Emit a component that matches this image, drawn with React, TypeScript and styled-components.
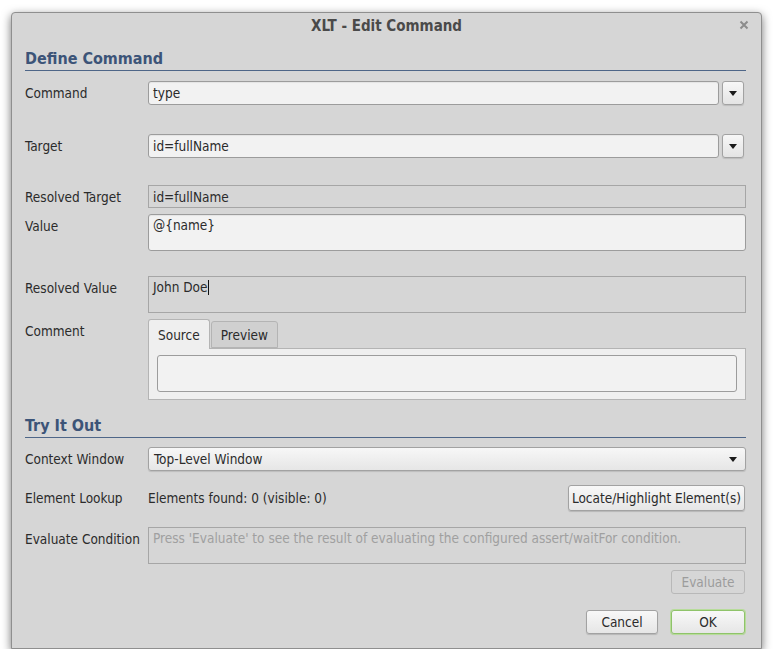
import React from "react";
import styled, { createGlobalStyle } from "styled-components";

const Global = createGlobalStyle`
  html, body { margin: 0; padding: 0; background: #ffffff; }
  body {
    font-family: "DejaVu Sans Condensed", "DejaVu Sans", sans-serif;
    font-stretch: condensed;
    font-size: 13.5px;
    color: #2b2b2b;
  }
  * { box-sizing: border-box; }
`;

const Window = styled.div`
  margin: 12px 0 0 11px;
  width: 751px;
  background: #d6d6d6;
  border: 1px solid #8f8f8f;
  border-radius: 4px 4px 0 0;
  box-shadow: 0 3px 10px rgba(0, 0, 0, 0.55);
  display: flex;
  flex-direction: column;
`;

const TitleBar = styled.div`
  height: 27px;
  padding-bottom: 2px;
  display: flex;
  align-items: center;
  justify-content: center;
  position: relative;
  font-weight: bold;
  font-size: 15px;
  color: #4a4a4a;
`;

const CloseBtn = styled.div`
  position: absolute;
  right: 12px;
  top: 7px;
  width: 10px;
  height: 10px;
  display: flex;
`;

const Body = styled.div`
  padding: 0 15px 14px 13px;
  display: flex;
  flex-direction: column;
`;

const SectionHeader = styled.div<{ $top: number }>`
  padding-top: ${(p) => p.$top}px;
  padding-bottom: 2px;
  line-height: 19px;
  font-size: 16px;
  font-weight: bold;
  color: #3c5478;
  border-bottom: 1px solid #4e6688;
`;

const Row = styled.div<{ $mt: number; $center?: boolean }>`
  margin-top: ${(p) => p.$mt}px;
  display: flex;
  align-items: ${(p) => (p.$center ? "center" : "flex-start")};
`;

const Label = styled.div<{ $pt?: number }>`
  width: 123px;
  flex: none;
  line-height: 22px;
  padding-top: ${(p) => p.$pt ?? 0}px;
  color: #2b2b2b;
`;

const Field = styled.div`
  flex: 1;
  display: flex;
  min-width: 0;
`;

const Input = styled.div<{ $h: number }>`
  flex: 1;
  height: ${(p) => p.$h}px;
  background: #f2f2f2;
  border: 1px solid #9c9c9c;
  border-radius: 3px;
  padding: 0 4px;
  line-height: ${(p) => (p.$h > 30 ? 21 : p.$h - 1)}px;
  color: #2b2b2b;
  box-shadow: inset 0 1px 1px rgba(0, 0, 0, 0.06);
`;

const Disabled = styled.div<{ $h: number; $muted?: boolean }>`
  flex: 1;
  height: ${(p) => p.$h}px;
  background: #d6d6d6;
  border: 1px solid #a6a6a6;
  padding: 0 4px;
  line-height: ${(p) => (p.$h > 30 ? 21 : p.$h - 1)}px;
  color: ${(p) => (p.$muted ? "#a0a0a0" : "#2b2b2b")};
  white-space: nowrap;
  overflow: hidden;
`;

const Caret = styled.span`
  display: inline-block;
  width: 1px;
  height: 15px;
  background: #111;
  vertical-align: -3px;
`;

const DropBtn = styled.div`
  width: 22px;
  height: 24px;
  margin-left: 3px;
  margin-right: 2px;
  border: 1px solid #a2a2a2;
  border-radius: 3px;
  background: linear-gradient(#f7f7f7, #e4e4e4);
  box-shadow: 0 1px 1px rgba(0, 0, 0, 0.12);
  display: flex;
  align-items: center;
  justify-content: center;
`;

const Triangle = () => (
  <svg width="8" height="5" viewBox="0 0 8 5">
    <path d="M0 0 H8 L4 5 Z" fill="#1a1a1a" />
  </svg>
);

const SelectBox = styled.div`
  flex: 1;
  height: 24px;
  border: 1px solid #a2a2a2;
  border-radius: 3px;
  background: linear-gradient(#f7f7f7, #e6e6e6);
  box-shadow: 0 1px 1px rgba(0, 0, 0, 0.12);
  display: flex;
  align-items: center;
  justify-content: space-between;
  padding: 0 8px 0 5px;
`;

const Tabs = styled.div`
  flex: 1;
  display: flex;
  flex-direction: column;
`;

const TabStrip = styled.div`
  display: flex;
  align-items: flex-end;
  height: 29px;
`;

const Tab = styled.div<{ $active?: boolean }>`
  height: ${(p) => (p.$active ? 30 : 27)}px;
  padding: 0 9px;
  margin-right: 1px;
  margin-bottom: ${(p) => (p.$active ? -1 : 0)}px;
  background: ${(p) => (p.$active ? "#efefef" : "#d0d0d0")};
  border: 1px solid #b4b4b4;
  border-bottom: ${(p) => (p.$active ? "none" : "1px solid #b4b4b4")};
  border-radius: 3px 3px 0 0;
  display: flex;
  align-items: center;
  color: #2b2b2b;
  position: relative;
  z-index: ${(p) => (p.$active ? 1 : 0)};
`;

const TabPane = styled.div`
  height: 52px;
  background: #efefef;
  border: 1px solid #b4b4b4;
  padding: 6px 8px 7px 8px;
  display: flex;
`;

const InnerArea = styled.div`
  flex: 1;
  background: #f2f2f2;
  border: 1px solid #9c9c9c;
  border-radius: 3px;
`;

const StaticText = styled.div`
  flex: 1;
  color: #2b2b2b;
`;

const Button = styled.button<{ $w: number; $h?: number; $default?: boolean; $disabled?: boolean }>`
  width: ${(p) => p.$w}px;
  height: ${(p) => p.$h ?? 24}px;
  font: inherit;
  font-stretch: condensed;
  font-size: 13.5px;
  color: ${(p) => (p.$disabled ? "#9c9c9c" : "#2b2b2b")};
  background: ${(p) => (p.$disabled ? "#d6d6d6" : "linear-gradient(#f8f8f8, #e6e6e6)")};
  border: 1px solid ${(p) => (p.$disabled ? "#b8b8b8" : p.$default ? "#8fc36a" : "#a2a2a2")};
  border-radius: 3px;
  box-shadow: ${(p) =>
    p.$disabled
      ? "none"
      : p.$default
      ? "0 0 0 1px #b7dc9a, 0 1px 1px rgba(0,0,0,0.15)"
      : "0 1px 1px rgba(0,0,0,0.15)"};
  padding: 0;
  flex: none;
`;

const ButtonRow = styled.div<{ $mt: number }>`
  margin-top: ${(p) => p.$mt}px;
  margin-right: 1px;
  display: flex;
  justify-content: flex-end;
  gap: 13px;
`;

export default function App() {
  return (
    <>
      <Global />
      <Window>
        <TitleBar>
          XLT - Edit Command
          <CloseBtn>
            <svg width="10" height="10" viewBox="0 0 10 10">
              <path d="M1.5 1.5 L8.5 8.5 M8.5 1.5 L1.5 8.5" stroke="#8c8c8c" strokeWidth="2" />
            </svg>
          </CloseBtn>
        </TitleBar>
        <Body>
          <SectionHeader $top={9}>Define Command</SectionHeader>

          <Row $mt={10} $center>
            <Label>Command</Label>
            <Field>
              <Input $h={24}>type</Input>
              <DropBtn>
                <Triangle />
              </DropBtn>
            </Field>
          </Row>

          <Row $mt={29} $center>
            <Label>Target</Label>
            <Field>
              <Input $h={24}>id=fullName</Input>
              <DropBtn>
                <Triangle />
              </DropBtn>
            </Field>
          </Row>

          <Row $mt={27} $center>
            <Label>Resolved Target</Label>
            <Field>
              <Disabled $h={23}>id=fullName</Disabled>
            </Field>
          </Row>

          <Row $mt={6}>
            <Label $pt={1}>Value</Label>
            <Field>
              <Input $h={37}>@{"{name}"}</Input>
            </Field>
          </Row>

          <Row $mt={25}>
            <Label $pt={1}>Resolved Value</Label>
            <Field>
              <Disabled $h={37}>
                John Doe
                <Caret />
              </Disabled>
            </Field>
          </Row>

          <Row $mt={6}>
            <Label $pt={1}>Comment</Label>
            <Tabs>
              <TabStrip>
                <Tab $active>Source</Tab>
                <Tab>Preview</Tab>
              </TabStrip>
              <TabPane>
                <InnerArea />
              </TabPane>
            </Tabs>
          </Row>

          <SectionHeader $top={16}>Try It Out</SectionHeader>

          <Row $mt={9} $center>
            <Label>Context Window</Label>
            <SelectBox>
              <span>Top-Level Window</span>
              <Triangle />
            </SelectBox>
          </Row>

          <Row $mt={14} $center>
            <Label>Element Lookup</Label>
            <StaticText>Elements found: 0 (visible: 0)</StaticText>
            <Button $w={177} $h={26} style={{ marginRight: 1 }}>
              Locate/Highlight Element(s)
            </Button>
          </Row>

          <Row $mt={16}>
            <Label $pt={1}>Evaluate Condition</Label>
            <Field>
              <Disabled $h={37} $muted>
                Press 'Evaluate' to see the result of evaluating the configured assert/waitFor condition.
              </Disabled>
            </Field>
          </Row>

          <ButtonRow $mt={6}>
            <Button $w={74} $disabled>
              Evaluate
            </Button>
          </ButtonRow>

          <ButtonRow $mt={16}>
            <Button $w={72}>Cancel</Button>
            <Button $w={74} $default>
              OK
            </Button>
          </ButtonRow>
        </Body>
      </Window>
    </>
  );
}
